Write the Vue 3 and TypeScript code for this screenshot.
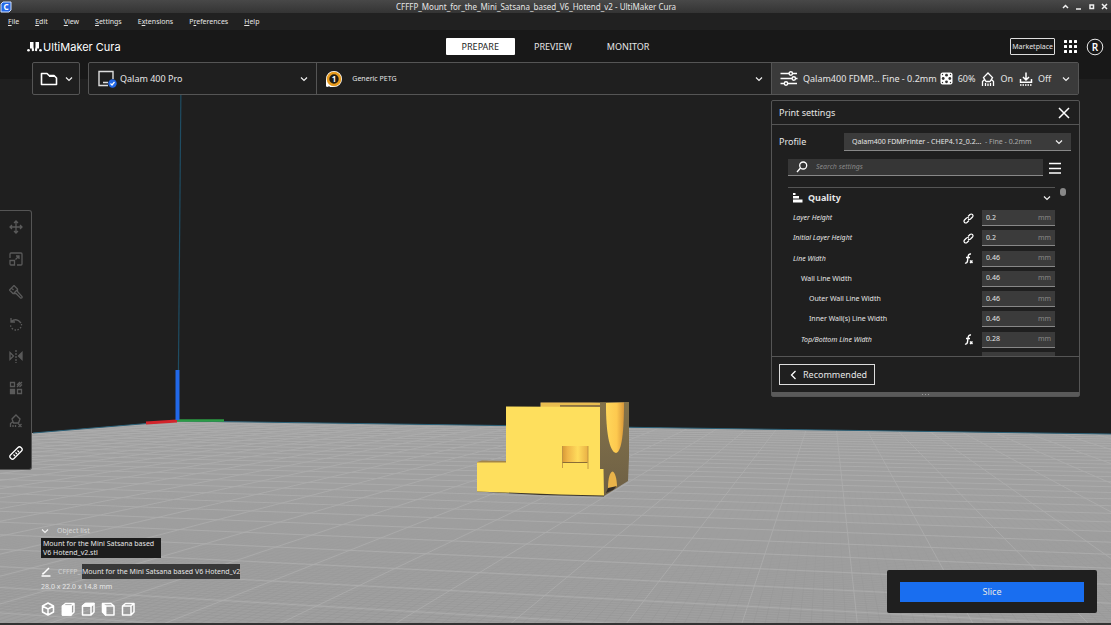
<script setup lang="ts">
import { ref } from 'vue'

interface Setting {
  id: string
  label: string
  value: string
  level: number
  changed: boolean
  icon: 'link' | 'fx' | ''
}

interface Segment {
  x1: number
  y1: number
  x2: number
  y2: number
}

interface Menu {
  before: string
  key: string
  after: string
}

const menus: Menu[] = [
  { before: '', key: 'F', after: 'ile' },
  { before: '', key: 'E', after: 'dit' },
  { before: '', key: 'V', after: 'iew' },
  { before: '', key: 'S', after: 'ettings' },
  { before: 'E', key: 'x', after: 'tensions' },
  { before: 'P', key: 'r', after: 'eferences' },
  { before: '', key: 'H', after: 'elp' },
]
const stages = ['PREPARE', 'PREVIEW', 'MONITOR']
const activeStage = ref('PREPARE')
const search = ref('')

const settings = ref<Setting[]>([
  { id: 'layer-height', label: 'Layer Height', value: '0.2', level: 0, changed: true, icon: 'link' },
  { id: 'initial-layer-height', label: 'Initial Layer Height', value: '0.2', level: 0, changed: true, icon: 'link' },
  { id: 'line-width', label: 'Line Width', value: '0.46', level: 0, changed: true, icon: 'fx' },
  { id: 'wall-line-width', label: 'Wall Line Width', value: '0.46', level: 1, changed: false, icon: '' },
  { id: 'outer-wall-line-width', label: 'Outer Wall Line Width', value: '0.46', level: 2, changed: false, icon: '' },
  { id: 'inner-wall-line-width', label: 'Inner Wall(s) Line Width', value: '0.46', level: 2, changed: false, icon: '' },
  { id: 'top-bottom-line-width', label: 'Top/Bottom Line Width', value: '0.28', level: 1, changed: true, icon: 'fx' },
  { id: 'infill-line-width', label: '', value: '', level: 1, changed: false, icon: '' },
])

const tools = ['Move', 'Scale', 'Paint', 'Rotate', 'Mirror', 'Per model settings', 'Support blocker', 'Measure']
const views = ['3D view', 'Front view', 'Top view', 'Left view', 'Right view']

// Build plate grid in perspective: one family of lines runs to a vanishing
// point behind the plate, the other to a point far to the left.
const horizon = 361
function depthLine(n: number): Segment {
  const slope = 0.108 + 0.44 * n
  return { x1: 829 + slope * 55, y1: horizon + 55, x2: 829 + slope * 280, y2: horizon + 280 }
}
function crossLine(k: number): Segment {
  const drop = 1 / (0.00424 + 0.00039 * k)
  const at = (x: number) => horizon + drop * (1 + (x - 570) / 4444)
  return { x1: 0, y1: at(0), x2: 1111, y2: at(1111) }
}
const range = (from: number, to: number) => Array.from({ length: to - from + 1 }, (_, i) => from + i)
const majorLines: Segment[] = [...range(-25, 16).map(depthLine), ...range(-2, 28).map(crossLine)]
const minorLines: Segment[] = [
  ...range(-120, 60).filter((i) => i % 10 !== 0).map((i) => depthLine(i / 10)),
  ...range(-20, 60).filter((i) => i % 10 !== 0).map((i) => crossLine(i / 10)),
]
</script>

<template>
  <div class="app">
    <svg class="scene" viewBox="0 0 1111 625" preserveAspectRatio="none" aria-hidden="true">
      <defs>
        <clipPath id="plate"><path d="M33 433 177 421 1111 434V625H0V436Z" /></clipPath>
        <linearGradient id="fade" x1="0" y1="0" x2="0" y2="1">
          <stop offset="0.78" stop-color="#000" />
          <stop offset="0.98" stop-color="#fff" />
        </linearGradient>
        <mask id="near" maskUnits="userSpaceOnUse" x="0" y="0" width="1111" height="625">
          <rect width="1111" height="625" fill="url(#fade)" />
        </mask>
        <linearGradient id="pin">
          <stop offset="0" stop-color="#d79a36" />
          <stop offset="0.2" stop-color="#efb548" />
          <stop offset="0.6" stop-color="#ffdc5c" />
          <stop offset="1" stop-color="#e9b045" />
        </linearGradient>
        <linearGradient id="bore">
          <stop offset="0" stop-color="#ffd75a" />
          <stop offset="0.6" stop-color="#fdc94f" />
          <stop offset="1" stop-color="#d8973a" />
        </linearGradient>
        <linearGradient id="side" x1="0" y1="0" x2="0" y2="1">
          <stop offset="0" stop-color="#84734a" />
          <stop offset="1" stop-color="#6d5f45" />
        </linearGradient>
      </defs>
      <path d="M181 80 178 420" stroke="#1f4d63" stroke-width="1.2" />
      <g clip-path="url(#plate)">
        <rect width="1111" height="625" fill="#a0a0a0" />
        <g stroke="#8d8d8d" stroke-width="0.6" opacity="0.5" mask="url(#near)">
          <line v-for="(l, i) in minorLines" :key="i" v-bind="l" />
        </g>
        <g stroke="#b3b3b3" stroke-width="0.9" opacity="0.65">
          <line v-for="(l, i) in majorLines" :key="i" v-bind="l" />
        </g>
      </g>
      <path d="M33 433 177 421 1111 434" fill="none" stroke="#2b6077" stroke-width="1" />
      <path d="M146 423 177 421" stroke="#d3242b" stroke-width="3" />
      <path d="M177 420.500H224" stroke="#2c9c45" stroke-width="2.500" />
      <path d="M177.500 370V420" stroke="#2168e8" stroke-width="4" />

      <path d="M540 402.500 629 402V457L628 481 604 496H598V407H540Z" fill="url(#side)" />
      <path d="M541 402.500 560 402 600 403V407H541Z" fill="#e9bd50" />
      <path d="M541 402H590V403H541Z M560 405H600V407H560Z" fill="#8f7442" />
      <path d="M606 406V403L624 402.500C624 430 622 452 616 453 609 452 606 430 606 406Z" fill="url(#bore)" />
      <path d="M608 488C608 478 610 472 612.500 471.500 615 472 617 479 617 487L612 488Z" fill="#e9b34a" />
      <path d="M606 493 608 488 617 486 613 490Z" fill="#332d28" />
      <path d="M477 462 482 460.500 506 461V463H477Z" fill="#a3854a" />
      <path d="M477 491.500 540 495 604 496.500V494L477 490Z" fill="#3a342a" />
      <path d="M506 406.500 600 407V469H603.500L604 495.500 560 494.500 477 491.500V462.500H506Z" fill="#fedf5d" />
      <path d="M562.500 446H588V462H562.500Z" fill="url(#pin)" />
      <path d="M562.500 446V468 M588 446V469" fill="none" stroke="#b78a40" stroke-width="0.800" />
      <path d="M562.500 462.500H587.500" stroke="#8a6d36" stroke-width="1" />
      <rect y="623" width="1111" height="2" fill="#333" />
    </svg>

    <header class="titlebar">
      <svg class="app-icon" width="12" height="12" viewBox="0 0 12 12" aria-hidden="true">
        <path d="M3 1H11V9L9 11H1V3Z" fill="#2468e6" stroke="#cfe0ff" stroke-width="1" />
        <text x="6" y="9" text-anchor="middle" font-size="8" font-weight="700" fill="#fff">C</text>
      </svg>
      <h1>CFFFP_Mount_for_the_Mini_Satsana_based_V6_Hotend_v2 - UltiMaker Cura</h1>
      <div class="window-buttons">
        <button type="button" aria-label="Shade"><svg width="7" height="7" viewBox="0 0 7 7"><path d="M1 5 3.500 2.500 6 5" /></svg></button>
        <button type="button" aria-label="Minimize"><svg width="7" height="7" viewBox="0 0 7 7"><path d="M1 6H6" /></svg></button>
        <button type="button" aria-label="Maximize"><svg width="7" height="7" viewBox="0 0 7 7"><path d="M2 2H5.500V5.500H2Z" /></svg></button>
        <button type="button" aria-label="Close"><svg width="7" height="7" viewBox="0 0 7 7"><path d="M1 1 6 6M6 1 1 6" /></svg></button>
      </div>
    </header>

    <nav class="menubar" aria-label="Main menu">
      <button v-for="m in menus" :key="m.after" type="button">{{ m.before }}<u>{{ m.key }}</u>{{ m.after }}</button>
    </nav>

    <div class="header">
      <div class="brand">
        <svg width="15" height="11" viewBox="0 0 15 11" aria-hidden="true" fill="#fff">
          <path d="M3 1H6.500V6L7 8.500A1.200 1.200 0 0 1 4.800 9.500V7.500H3ZM8.500 1H12V7.500H10.200V9.500A1.200 1.200 0 0 1 8 8.500L8.500 6Z" />
          <circle cx="1.500" cy="9.200" r="1.300" />
          <circle cx="13.500" cy="9.200" r="1.300" />
        </svg>
        <span>UltiMaker Cura</span>
      </div>
      <nav class="stages" aria-label="Stages">
        <button v-for="s in stages" :key="s" type="button" :class="{ active: s === activeStage }" @click="activeStage = s">{{ s }}</button>
      </nav>
      <div class="account">
        <button type="button" class="market">Marketplace</button>
        <button type="button" aria-label="Applications">
          <svg width="13" height="13" viewBox="0 0 13 13" fill="#fff">
            <template v-for="r in 3" :key="r"><rect v-for="c in 3" :key="c" :x="c * 5 - 5" :y="r * 5 - 5" width="3" height="3" rx="0.500" /></template>
          </svg>
        </button>
        <button type="button" aria-label="Account">
          <svg width="18" height="18" viewBox="0 0 18 18">
            <circle cx="9" cy="9" r="7.800" fill="none" stroke="#e8e8e8" stroke-width="1" />
            <text x="9" y="12.500" text-anchor="middle" font-size="10" font-weight="600" fill="#fff">R</text>
          </svg>
        </button>
      </div>
    </div>

    <div class="stagebar">
      <button type="button" class="open-file" aria-label="Open file">
        <svg width="18" height="14" viewBox="0 0 18 14" fill="none" stroke="#fff" stroke-width="1.600" stroke-linejoin="round"><path d="M1.500 1.500H7L9 3.500H14L16.500 6V12.500H1.500Z" /><path d="M9 4.200H14.500" /></svg>
        <svg class="chevron" width="8" height="8" viewBox="0 0 8 8"><path d="M1 2.500 4 5.500 7 2.500" /></svg>
      </button>
      <div class="bar">
        <div class="selector printer">
          <svg width="20" height="18" viewBox="0 0 20 18" fill="none">
            <path d="M2 15.500V1.500H16V9M1.300 15.500H11M6 12.500H11" stroke="#ddd" stroke-width="1.400" />
            <circle cx="15.500" cy="13.500" r="4.200" fill="#2168e8" /><path d="M13.500 13.500 15 15 17.500 12" stroke="#fff" stroke-width="1.200" />
          </svg>
          <select aria-label="Printer"><option>Qalam 400 Pro</option></select>
          <svg class="chevron" width="8" height="8" viewBox="0 0 8 8"><path d="M1 2.500 4 5.500 7 2.500" /></svg>
        </div>
        <div class="selector material">
          <svg width="18" height="18" viewBox="0 0 18 18">
            <path d="M1 16.500V9A8 8 0 1 1 9 17H5L4 16 3 17Z" fill="#fff" />
            <circle cx="9" cy="9" r="6" fill="#1d1a14" stroke="#e79b1e" stroke-width="2.600" />
            <text x="9" y="12" text-anchor="middle" font-size="8" font-weight="700" fill="#fff">1</text>
          </svg>
          <select class="small" aria-label="Material"><option>Generic PETG</option></select>
          <svg class="chevron" width="8" height="8" viewBox="0 0 8 8"><path d="M1 2.500 4 5.500 7 2.500" /></svg>
        </div>
        <button type="button" class="summary" aria-expanded="true">
          <svg width="18" height="15" viewBox="0 0 18 15" fill="none" stroke="#fff" stroke-width="1.400">
            <path d="M0.500 2.500H9M12.500 2.500H17M0.500 7.500H12M15.500 7.500H17.500M0.500 12.500H4M8 12.500H17" />
            <circle cx="10.800" cy="2.500" r="1.700" /><circle cx="13.800" cy="7.500" r="1.700" /><circle cx="6" cy="12.500" r="1.700" />
          </svg>
          <span class="profile-name">Qalam400 FDMP... Fine - 0.2mm</span>
          <svg width="13" height="13" viewBox="0 0 13 13"><rect x="0.500" y="0.500" width="12" height="12" rx="2" fill="#fff" /><g fill="#333"><circle cx="6.500" cy="3.200" r="1.400" /><circle cx="6.500" cy="9.800" r="1.400" /><circle cx="3.200" cy="6.500" r="1.400" /><circle cx="9.800" cy="6.500" r="1.400" /><circle cx="2.500" cy="2.500" r="0.700" /><circle cx="10.500" cy="2.500" r="0.700" /><circle cx="2.500" cy="10.500" r="0.700" /><circle cx="10.500" cy="10.500" r="0.700" /></g></svg>
          <span class="value">60%</span>
          <svg width="14" height="14" viewBox="0 0 14 14" fill="none" stroke="#fff" stroke-width="1.300"><path d="M7 1 11.500 5.500 9 9.500H5L2.500 5.500ZM3.500 7.500 1.500 9.500V14M4.500 11V14M7 11.500V14M9.500 11V14M10.500 7.500 12.500 9.500V14" /></svg>
          <span class="value">On</span>
          <svg width="14" height="14" viewBox="0 0 14 14" fill="none" stroke="#fff" stroke-width="1.500"><path d="M7 0.500V8M4 5 7 8 10 5M1.500 7V10.300H12.500V7" /><path d="M1 13H13" stroke-dasharray="1.500 1" /></svg>
          <span class="value">Off</span>
          <svg class="chevron" width="8" height="8" viewBox="0 0 8 8"><path d="M1 2.500 4 5.500 7 2.500" /></svg>
        </button>
      </div>
    </div>

    <main class="workspace">
      <aside class="toolbar" aria-label="Tools">
        <button v-for="(t, i) in tools" :key="t" type="button" :aria-label="t" :class="{ enabled: i === 7 }">
          <svg width="14" height="14" viewBox="0 0 14 14">
            <path v-if="i === 0" d="M7 1V13M1 7H13M5 3 7 1 9 3M5 11 7 13 9 11M3 5 1 7 3 9M11 5 13 7 11 9" />
            <path v-else-if="i === 1" d="M1 6V2Q1 1 2 1H12Q13 1 13 2V12Q13 13 12 13H8M1 8.500H5.500V13H2Q1 13 1 12ZM6.500 7.500 10 4M7 4H10V7" />
            <path v-else-if="i === 2" d="M0.500 5 5 0.500 8.500 4V6.500L13 11.500Q13.500 13.500 11.500 13L7 8.500H4ZM2.500 3 4.500 5M5 8 8 5" />
            <template v-else-if="i === 3"><path d="M2 1V5H6M2 5Q7 0 12 6" /><path d="M12.500 7A5.500 5.500 0 0 1 1.500 8" stroke-dasharray="1.500 1.500" /></template>
            <template v-else-if="i === 4"><path d="M1 3.500 4.500 7 1 10.500Z" /><path d="M13 3.500 9.500 7 13 10.500Z" fill="currentColor" /><path d="M7 1V14" stroke-dasharray="2 1" /></template>
            <template v-else-if="i === 5"><path d="M1.500 1.500H5.500V5.500H1.500ZM8.500 8.500H12.500V12.500H8.500ZM8 4 11 1M8 6 13 1M10.500 6 13 3.500" /><path d="M1.500 8.500H5.500V12.500H1.500Z" fill="currentColor" /></template>
            <path v-else-if="i === 6" d="M7 1 11 5 9.500 9H4.500L3 5ZM3.500 8 1.500 9.500V13M4 11V13M6.500 11V13M9.500 10 12.500 13M12.500 10 9.500 13" />
            <path v-else d="M9 1.500Q10.500 0 12 1.500L12.500 2Q14 3.500 12.500 5L5 12.500Q3.500 14 2 12.500L1.500 12Q0 10.500 1.500 9ZM4.500 8.500 6 10M6.500 6.500 8 8M8.500 4.500 10 6" />
          </svg>
        </button>
      </aside>

      <section class="panel" aria-label="Print settings">
        <div class="panel-head">
          <h2>Print settings</h2>
          <button type="button" aria-label="Close panel"><svg width="12" height="12" viewBox="0 0 12 12" stroke="#fff" stroke-width="1.500"><path d="M1 1 11 11M11 1 1 11" /></svg></button>
        </div>
        <div class="profile">
          <label for="profile">Profile</label>
          <div class="profile-box">
            <select id="profile"><option>Qalam400 FDMPrinter - CHEP4.12_0.2...</option></select>
            <span>- Fine - 0.2mm</span>
            <svg class="chevron" width="8" height="8" viewBox="0 0 8 8"><path d="M1 2.500 4 5.500 7 2.500" /></svg>
          </div>
        </div>
        <div class="search-row">
          <label class="search">
            <svg width="12" height="12" viewBox="0 0 12 12" fill="none" stroke="#fff" stroke-width="1.300"><circle cx="7.200" cy="4.500" r="3.500" /><path d="M4.500 7 1 11" /></svg>
            <input v-model="search" type="text" placeholder="Search settings" aria-label="Search settings" />
          </label>
          <button type="button" aria-label="Setting visibility"><svg width="12" height="12" viewBox="0 0 12 12" stroke="#fff" stroke-width="1.400"><path d="M0 1.500H12M0 6.500H12M0 11H12" /></svg></button>
        </div>
        <div class="list-area">
          <div class="list">
            <button type="button" class="category" aria-expanded="true">
              <svg width="10" height="10" viewBox="0 0 10 10" fill="#fff"><path d="M0 0H2.500V2H0ZM0 3H6V5.500H0ZM0 6.500H9.500V9.500H0Z" /></svg>
              <span>Quality</span>
              <svg class="chevron" width="8" height="8" viewBox="0 0 8 8"><path d="M1 2.500 4 5.500 7 2.500" /></svg>
            </button>
            <div class="rows">
              <div v-for="s in settings" :key="s.id" class="row" :class="['level-' + s.level, { changed: s.changed }]">
                <label :for="s.id">{{ s.label }}</label>
                <svg v-if="s.icon === 'link'" width="11" height="11" viewBox="0 0 11 11" fill="none" stroke="#fff" stroke-width="1.200"><path d="M5 3.500 7 1.500Q8.200 0.500 9.500 1.500 10.500 2.800 9.500 4L7.500 6Q6.300 7 5 6M6 7.500 4 9.500Q2.800 10.500 1.500 9.500 0.500 8.200 1.500 7L3.500 5Q4.700 4 6 5" /></svg>
                <svg v-else-if="s.icon === 'fx'" width="11" height="11" viewBox="0 0 11 11" fill="none" stroke="#fff" stroke-width="1.400"><path d="M8 1Q5.500 0.500 5 4L4.500 8Q4 10.500 2 10M3 4.500H7M7 7.500 9.500 10M9.500 7.500 7 10" /></svg>
                <div class="field">
                  <input :id="s.id" v-model="s.value" type="text" :aria-label="s.label || 'Value'" />
                  <span v-if="s.value">mm</span>
                </div>
              </div>
            </div>
          </div>
          <div class="scroll"><div class="thumb"></div></div>
        </div>
        <div class="panel-foot">
          <button type="button" class="recommended">
            <svg width="7" height="10" viewBox="0 0 7 10" fill="none" stroke="#fff" stroke-width="1.300"><path d="M5.500 1 1.500 5 5.500 9" /></svg>
            Recommended
          </button>
        </div>
        <div class="resizer"><i></i><i></i><i></i></div>
      </section>
    </main>

    <footer class="bottom">
      <section class="objects" aria-label="Object list">
        <button type="button" class="object-head">
          <svg class="chevron" width="8" height="8" viewBox="0 0 8 8"><path d="M1 2.500 4 5.500 7 2.500" /></svg>
          <span>Object list</span>
        </button>
        <div class="tip">Mount for the Mini Satsana based V6 Hotend_v2.stl</div>
        <div class="job">
          <svg width="10" height="10" viewBox="0 0 10 10" fill="none" stroke="#fff" stroke-width="1.500"><path d="M2.500 6.500 8 1M2.500 6 1.500 7.500M0.500 9H9.500" /></svg>
          <span class="prefix">CFFFP_</span><span class="name-tip">Mount for the Mini Satsana based V6 Hotend_v2</span>
        </div>
        <p class="dims">28.0 x 22.0 x 14.8 mm</p>
        <div class="views">
          <button v-for="(v, i) in views" :key="v" type="button" :aria-label="v">
            <svg width="14" height="14" viewBox="0 0 14 14" fill="none" stroke="#fff" stroke-width="1.500" stroke-linejoin="round">
              <path v-if="i === 0" d="M7 1 12.500 4V10L7 13 1.500 10V4ZM1.500 4 7 7 12.500 4M7 7V13" />
              <template v-else-if="i === 3"><path d="M1.500 1.500 4.500 4V13L1.500 10Z" fill="#fff" /><path d="M1.500 1.500H10L13 4V13H4.500V4H13" /></template>
              <template v-else>
                <path d="M1.500 4 4.500 1.500H13V10L10 13H1.500ZM1.500 4H10V13M10 4 13 1.500" />
                <path v-if="i === 1" d="M1.500 4H10V13H1.500Z" fill="#fff" />
                <path v-if="i === 2" d="M1.500 4 4.500 1.500H13L10 4Z" fill="#fff" />
              </template>
            </svg>
          </button>
        </div>
      </section>
      <div class="slice-box"><button type="button">Slice</button></div>
    </footer>
  </div>
</template>

<style>
body {
  margin: 0;
  background: #1f1f1f;
}
</style>

<style scoped>
.app {
  position: relative;
  box-sizing: border-box;
  min-height: 100vh;
  display: flex;
  flex-direction: column;
  overflow: hidden;
  background: linear-gradient(#181818 79px, #1f1f1f 79px);
  color: #e6e6e6;
  font-family: "Noto Sans", "Open Sans", sans-serif;
  font-size: 9px;
  line-height: 12px;
}
.app * {
  box-sizing: border-box;
}
.scene {
  position: absolute;
  inset: 0;
  width: 100%;
  height: 100%;
}
.titlebar,
.menubar,
.header,
.stagebar,
.workspace,
.bottom {
  position: relative;
}
button,
select,
input {
  margin: 0;
  padding: 0;
  border: 0;
  background: none;
  color: inherit;
  font: inherit;
}
select {
  appearance: none;
  outline: none;
}
button {
  display: flex;
  align-items: center;
}
svg {
  flex: none;
  display: block;
}
h1,
h2,
p {
  margin: 0;
  font: inherit;
}
.chevron {
  fill: none;
  stroke: #f0f0f0;
  stroke-width: 1.2;
}
.titlebar {
  display: grid;
  grid-template-columns: 60px 1fr 99px;
  align-items: center;
  height: 13px;
  background: linear-gradient(#484848, #343434);
}
.titlebar h1 {
  text-align: center;
  font-size: 8px;
}
.window-buttons {
  display: flex;
  justify-content: flex-end;
  gap: 6px;
  padding-right: 3px;
}
.window-buttons svg {
  fill: none;
  stroke: #f0f0f0;
  stroke-width: 1.5;
}
.menubar {
  display: flex;
  gap: 16px;
  height: 17px;
  padding-left: 8px;
  background: #212121;
  font-size: 7px;
}
.menubar button {
  display: block;
}
.header {
  display: grid;
  grid-template-columns: 1fr auto 1fr;
  align-items: center;
  height: 32px;
  padding-top: 1px;
}
.brand {
  display: flex;
  align-items: center;
  gap: 1px;
  padding-left: 27px;
  color: #fff;
  font-family: Inter, sans-serif;
  font-size: 11px;
}
.stages {
  display: flex;
  gap: 3px;
}
.stages button {
  height: 17px;
  padding: 0 16px;
  border-radius: 1px;
}
.stages .active {
  background: #fff;
  color: #1f1f1f;
}
.account {
  display: flex;
  align-items: center;
  justify-content: flex-end;
  gap: 9px;
  padding-right: 7px;
}
.market {
  height: 17px;
  padding: 0 1px;
  border: 1px solid #ddd;
  border-radius: 1px;
  font-size: 7px;
}
.stagebar {
  display: flex;
  gap: 8px;
  height: 33px;
  padding: 0 32px;
}
.open-file {
  gap: 7px;
  width: 48px;
  padding-left: 7px;
  border: 1px solid #555;
  border-radius: 2px;
  background: #1f1f1f;
}
.bar {
  flex: 1;
  display: grid;
  grid-template-columns: 1fr 2fr 307px;
  border: 1px solid #555;
  border-radius: 2px;
  background: #1f1f1f;
}
.selector {
  display: flex;
  align-items: center;
  padding: 0 8px;
}
.selector select {
  flex: 1;
  min-width: 0;
  padding-left: 3px;
}
.selector select.small {
  padding-left: 9px;
  font-size: 7px;
}
.material {
  border-left: 1px solid #555;
}
.summary {
  padding: 0 8px;
  border-left: 1px solid #555;
  background: #3a3a3a;
}
.summary .profile-name {
  margin: 0 3px 0 5px;
  white-space: nowrap;
}
.summary .value {
  margin: 0 6px 0 5px;
}
.summary .chevron {
  margin-left: auto;
}
.workspace {
  display: flex;
  justify-content: space-between;
  align-items: flex-start;
  padding: 5px 31px 0 0;
}
.toolbar {
  display: grid;
  width: 32px;
  margin-top: 110px;
  grid-template-rows: repeat(8, 1fr);
  height: 260px;
  border: 1px solid #555;
  border-left: 0;
  border-radius: 0 3px 3px 0;
  background: #1f1f1f;
}
.toolbar button {
  justify-content: center;
  color: #5a5a5a;
}
.toolbar button.enabled {
  color: #fff;
}
.toolbar svg {
  fill: none;
  stroke: currentColor;
  stroke-width: 1.3;
}
.panel {
  width: 309px;
  border: 1px solid #555;
  border-radius: 2px;
  background: #1f1f1f;
}
.panel-head {
  display: flex;
  justify-content: space-between;
  align-items: center;
  height: 24px;
  padding: 0 9px 0 7px;
  border-bottom: 1px solid #555;
}
.profile {
  display: flex;
  align-items: center;
  justify-content: space-between;
  height: 34px;
  padding: 0 8px 0 7px;
}
.profile-box {
  display: flex;
  align-items: center;
  gap: 3px;
  width: 227px;
  height: 18px;
  padding: 0 8px;
  border-bottom: 1px solid #888;
  background: #3b3b3b;
  font-size: 7px;
}
.profile-box span {
  color: #aaa;
}
.profile-box .chevron {
  margin-left: auto;
}
.search-row {
  display: flex;
  align-items: center;
  gap: 6px;
  padding-left: 16px;
}
.search {
  display: flex;
  align-items: center;
  gap: 8px;
  width: 255px;
  height: 17px;
  padding: 0 8px;
  border-bottom: 1px solid #888;
  background: #363636;
}
.search input {
  flex: 1;
  font-size: 7px;
  font-style: italic;
  outline: none;
}
.search input::placeholder {
  color: #888;
}
.list-area {
  display: flex;
  gap: 5px;
  height: 169px;
  margin-top: 11px;
  padding-left: 16px;
  overflow: hidden;
}
.list {
  width: 267px;
}
.category {
  width: 100%;
  height: 20px;
  gap: 5px;
  padding: 0 4px 0 5px;
  border-top: 1px solid #555;
  font-weight: 700;
}
.category .chevron {
  margin-left: auto;
}
.rows {
  display: grid;
  grid-template-rows: repeat(8, 1fr);
  height: 162px;
  margin-top: 1px;
}
.row {
  display: flex;
  align-items: center;
  padding-left: 5px;
  font-size: 7px;
}
.row.level-1 {
  padding-left: 13px;
}
.row.level-2 {
  padding-left: 21px;
}
.row.changed label {
  font-style: italic;
}
.row label {
  flex: 1;
}
.row svg {
  margin-right: 8px;
}
.field {
  display: flex;
  align-items: center;
  width: 73px;
  height: 16px;
  padding: 0 4px;
  border-bottom: 1px solid #888;
  background: #3b3b3b;
}
.field input {
  flex: 1;
  min-width: 0;
  outline: none;
}
.field span {
  color: #888;
}
.thumb {
  width: 6px;
  height: 8px;
  margin-top: 1px;
  border-radius: 3px;
  background: #888;
}
.panel-foot {
  padding: 7px;
  border-top: 1px solid #555;
}
.recommended {
  gap: 6px;
  height: 21px;
  padding: 0 7px 0 10px;
  border: 1px solid #ddd;
}
.resizer {
  display: flex;
  align-items: center;
  justify-content: center;
  gap: 2px;
  height: 4px;
  background: #5a5a5a;
}
.resizer i {
  width: 1px;
  height: 1px;
  background: #999;
}
.bottom {
  display: flex;
  align-items: flex-end;
  justify-content: space-between;
  margin-top: auto;
  padding: 0 14px 9px 41px;
  font-size: 7px;
}
.object-head {
  gap: 8px;
  height: 14px;
  color: #d6d6d6;
}
.tip {
  width: 120px;
  padding: 1px 2px;
  background: #1c1c1c;
  line-height: 9px;
}
.job {
  display: flex;
  align-items: center;
  margin: 6px 0 2px;
}
.prefix {
  width: 24px;
  margin-left: 7px;
  color: #d0d0d0;
}
.name-tip {
  height: 15px;
  line-height: 15px;
  background: #383838;
  white-space: nowrap;
}
.views {
  display: flex;
  gap: 6px;
  margin-top: 9px;
}
.slice-box {
  width: 210px;
  margin-bottom: 3px;
  padding: 12px 13px 11px;
  border-radius: 2px;
  background: #1f1f1f;
}
.slice-box button {
  justify-content: center;
  width: 100%;
  height: 20px;
  background: #196ef0;
  font-size: 9px;
}
</style>
